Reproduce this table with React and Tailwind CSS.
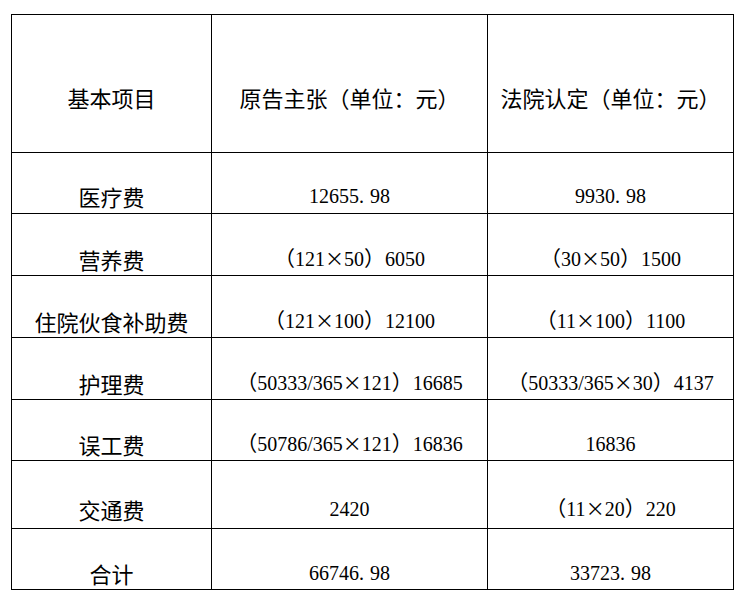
import React from 'react';

const rows = [
  { h: 'h-[61px]', pb: 'pb-[6px]', item: '医疗费', a: '12655.98', b: '9930.98' },
  { h: 'h-[62px]', pb: 'pb-[5px]', item: '营养费', a: '(121×50)6050', b: '(30×50)1500' },
  { h: 'h-[62px]', pb: 'pb-[5px]', item: '住院伙食补助费', a: '(121×100)12100', b: '(11×100)1100' },
  { h: 'h-[62px]', pb: 'pb-[5px]', item: '护理费', a: '(50333/365×121)16685', b: '(50333/365×30)4137' },
  { h: 'h-[61px]', pb: 'pb-[5px]', item: '误工费', a: '(50786/365×121)16836', b: '16836' },
  { h: 'h-[68px]', pb: 'pb-[8px]', item: '交通费', a: '2420', b: '(11×20)220' },
  { h: 'h-[61px]', pb: 'pb-[5px]', item: '合计', a: '66746.98', b: '33723.98' },
];

const cjk = "font-['Noto_Sans_CJK_SC',sans-serif]";

// render numbers like the Song-typeface original: full-width brackets and ×, half-width period
function Value({ text }) {
  const parts = text.split('');
  return (
    <span className="font-['Liberation_Serif','Noto_Sans_CJK_SC',serif] text-[20px] whitespace-nowrap">
      {parts.map((ch, i) => {
        if (ch === '(') return <span key={i} className={cjk + ' text-[21px]'}>（</span>;
        if (ch === ')') return <span key={i} className={cjk + ' text-[21px]'}>）</span>;
        if (ch === '×') return <span key={i} className={cjk + ' text-[19px]'}>×</span>;
        if (ch === '.') return <span key={i} className="inline-block w-[11px]">.</span>;
        return <span key={i}>{ch}</span>;
      })}
    </span>
  );
}

export default function App() {
  return (
    <div className="w-[746px] h-[600px] bg-white pl-[11px] pt-[14px] text-black">
      <div className="grid grid-cols-[200px_276px_246px] w-[723px] border-l border-t border-black leading-[22px]">
        <div className={`h-[138px] border-r border-b border-black flex justify-center pt-[71px] text-[22px] ${cjk}`}>基本项目</div>
        <div className={`h-[138px] border-r border-b border-black flex justify-center pt-[71px] text-[22px] ${cjk}`}>原告主张（单位：元）</div>
        <div className={`h-[138px] border-r border-b border-black flex justify-center pt-[71px] text-[22px] ${cjk}`}>法院认定（单位：元）</div>
        {rows.map((r) => (
          <React.Fragment key={r.item}>
            <div className={`${r.h} ${r.pb} border-r border-b border-black flex items-end justify-center text-[22px] ${cjk}`}>
              {r.item}
            </div>
            <div className={`${r.h} ${r.pb} border-r border-b border-black flex items-end justify-center`}>
              <Value text={r.a} />
            </div>
            <div className={`${r.h} ${r.pb} border-r border-b border-black flex items-end justify-center`}>
              <Value text={r.b} />
            </div>
          </React.Fragment>
        ))}
      </div>
    </div>
  );
}
